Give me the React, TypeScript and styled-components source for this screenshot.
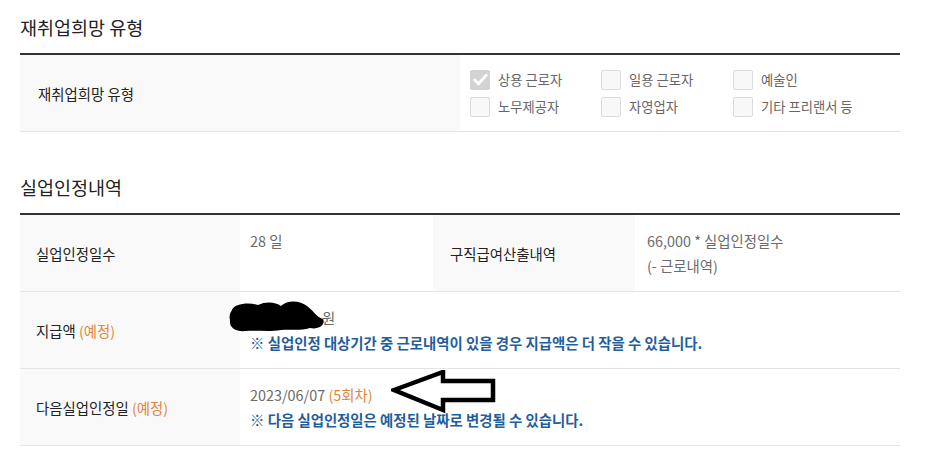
import React from "react";
import styled, { createGlobalStyle } from "styled-components";

const GlobalStyle = createGlobalStyle`
  html, body { margin: 0; padding: 0; background: #ffffff; }
  body {
    font-family: "Noto Sans CJK KR", "Noto Sans", "Liberation Sans", sans-serif;
    color: #333;
  }
`;

const Page = styled.div`
  width: 880px;
  padding: 0 31px 20px 20px;
`;

const Section = styled.section<{ $first?: boolean }>`
  margin-top: ${(p) => (p.$first ? "15px" : "43px")};
`;

const SectionTitle = styled.h2`
  margin: 0 0 14px;
  font-size: 18.5px;
  font-weight: 400;
  line-height: 24px;
  color: #222;
`;

const Table = styled.div`
  border-top: 2px solid #333;
`;

const Row = styled.div<{ $cols: string }>`
  display: grid;
  grid-template-columns: ${(p) => p.$cols};
  height: 76px;
  border-bottom: 1px solid #e4e4e4;
`;

const Label = styled.div<{ $pad?: number }>`
  background: #f9f9f9;
  display: flex;
  align-items: center;
  padding-left: ${(p) => p.$pad ?? 16}px;
  font-size: 14.4px;
  color: #222;
  white-space: nowrap;
`;

const Value = styled.div<{ $pad?: number }>`
  position: relative;
  padding: 13px ${(p) => p.$pad ?? 10}px 0;
  font-size: 14.4px;
  line-height: 25px;
  color: #6b6b6b;
  white-space: nowrap;
`;

const Line = styled.div``;

const Accent = styled.span`
  color: #e0873a;
`;

const Note = styled.div`
  color: #1f5e9c;
  font-weight: 700;
`;

const CheckCell = styled.div`
  display: flex;
  align-items: center;
  padding-left: 10px;
`;

const CheckGrid = styled.div`
  display: grid;
  grid-template-columns: 131px 132px 131px;
  row-gap: 7px;
`;

const CheckItem = styled.label`
  display: flex;
  align-items: center;
  gap: 8px;
  font-size: 13.3px;
  color: #666;
  height: 20px;
  white-space: nowrap;
`;

const Box = styled.span<{ $checked?: boolean }>`
  width: 20px;
  height: 20px;
  box-sizing: border-box;
  border-radius: 2px;
  border: 1px solid ${(p) => (p.$checked ? "#d3d3d3" : "#dcdcdc")};
  background: ${(p) => (p.$checked ? "#d3d3d3" : "#f8f8f8")};
  display: flex;
  align-items: center;
  justify-content: center;
`;

const Amount = styled.span`
  position: relative;
  display: inline-block;
  width: 72px;
  height: 14px;
`;

const Redaction = styled.svg`
  position: absolute;
  left: -22px;
  top: -10px;
`;

const ArrowMark = styled.svg`
  position: absolute;
  left: 151px;
  top: 1px;
`;

const checks: { label: string; checked?: boolean }[] = [
  { label: "상용 근로자", checked: true },
  { label: "일용 근로자" },
  { label: "예술인" },
  { label: "노무제공자" },
  { label: "자영업자" },
  { label: "기타 프리랜서 등" },
];

const Check = () => (
  <svg width="15" height="13" viewBox="0 0 15 13">
    <path d="M1.8 7 L5.6 10.8 L13.2 2.2" fill="none" stroke="#fff" strokeWidth="2.8" strokeLinecap="round" strokeLinejoin="round" />
  </svg>
);

export default function App() {
  return (
    <>
      <GlobalStyle />
      <Page>
        <Section $first>
          <SectionTitle>재취업희망 유형</SectionTitle>
          <Table>
            <Row $cols="440px 1fr">
              <Label $pad={18}>재취업희망 유형</Label>
              <CheckCell>
                <CheckGrid>
                  {checks.map((c) => (
                    <CheckItem key={c.label}>
                      <Box $checked={c.checked}>{c.checked && <Check />}</Box>
                      {c.label}
                    </CheckItem>
                  ))}
                </CheckGrid>
              </CheckCell>
            </Row>
          </Table>
        </Section>

        <Section>
          <SectionTitle>실업인정내역</SectionTitle>
          <Table>
            <Row $cols="220px 193px 202px 1fr">
              <Label>실업인정일수</Label>
              <Value>28 일</Value>
              <Label $pad={17}>구직급여산출내역</Label>
              <Value $pad={12}>
                <Line>66,000 * 실업인정일수</Line>
                <Line>(- 근로내역)</Line>
              </Value>
            </Row>
            <Row $cols="220px 1fr">
              <Label>
                지급액&nbsp;<Accent>(예정)</Accent>
              </Label>
              <Value>
                <Line>
                  <Amount>
                    <Redaction width="98" height="32" viewBox="0 0 98 32">
                      <path
                        d="M4 10 C6 4 20 2 30 5 C38 1 48 2 53 6 C60 -1 73 1 79 6 C85 10 88 17 95 19 C98 25 90 30 82 28 C72 31 62 29 53 30 C41 32 28 30 18 31 C8 32 1 28 2 20 C1 16 2 13 4 10 Z"
                        fill="#000"
                      />
                    </Redaction>
                  </Amount>
                  원
                </Line>
                <Note>※ 실업인정 대상기간 중 근로내역이 있을 경우 지급액은 더 작을 수 있습니다.</Note>
              </Value>
            </Row>
            <Row $cols="220px 1fr">
              <Label>
                다음실업인정일&nbsp;<Accent>(예정)</Accent>
              </Label>
              <Value>
                <Line>
                  2023/06/07 <Accent>(5회차)</Accent>
                </Line>
                <Note>※ 다음 실업인정일은 예정된 날짜로 변경될 수 있습니다.</Note>
                <ArrowMark width="106" height="44" viewBox="0 0 106 44">
                  <polygon
                    points="3,20 52,2 52,11 102,11 102,30 52,30 52,40"
                    fill="none"
                    stroke="#000"
                    strokeWidth="4.5"
                    strokeLinejoin="miter"
                  />
                </ArrowMark>
              </Value>
            </Row>
          </Table>
        </Section>
      </Page>
    </>
  );
}
